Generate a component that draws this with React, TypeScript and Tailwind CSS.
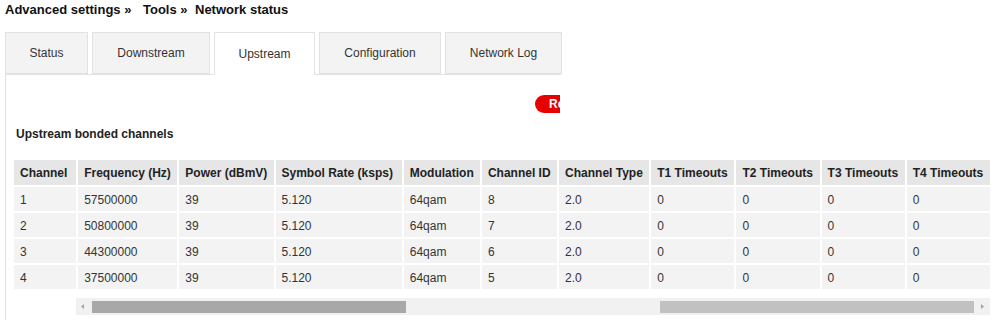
import React from "react";

const headers = [
  "Channel",
  "Frequency (Hz)",
  "Power (dBmV)",
  "Symbol Rate (ksps)",
  "Modulation",
  "Channel ID",
  "Channel Type",
  "T1 Timeouts",
  "T2 Timeouts",
  "T3 Timeouts",
  "T4 Timeouts",
];
const widths = [62, 99, 94, 126, 76, 75, 90, 83, 83, 83, 83];
const rows = [
  ["1", "57500000", "39", "5.120", "64qam", "8", "2.0", "0", "0", "0", "0"],
  ["2", "50800000", "39", "5.120", "64qam", "7", "2.0", "0", "0", "0", "0"],
  ["3", "44300000", "39", "5.120", "64qam", "6", "2.0", "0", "0", "0", "0"],
  ["4", "37500000", "39", "5.120", "64qam", "5", "2.0", "0", "0", "0", "0"],
];

const tabs = [
  { label: "Status", w: "w-[83px]" },
  { label: "Downstream", w: "w-[118px]" },
  { label: "Upstream", w: "w-[101px]", active: true },
  { label: "Configuration", w: "w-[122px]" },
  { label: "Network Log", w: "w-[117px]" },
];

export default function App() {
  return (
    <div className="w-[1000px] h-[320px] overflow-hidden bg-white text-[#222] font-['Liberation_Sans',Arial,sans-serif]">
      <div className="h-[32px] pl-[5px] pt-[2px] text-[13px] leading-[16px] font-bold text-[#111] whitespace-pre flex">
        <span className="w-[138px]">Advanced settings »</span>
        <span className="w-[52px]">Tools »</span>
        <span>Network status</span>
      </div>
      <div className="flex gap-[4px] pl-[5px] h-[43px] relative z-10">
        {tabs.map((t) => (
          <div
            key={t.label}
            className={`${t.w} flex items-center justify-center text-[12px] text-[#333] border border-[#e2e2e2] ${
              t.active ? "bg-white border-b-white h-[43px]" : "bg-[#f3f3f3] h-[42px]"
            }`}
          >
            {t.label}
          </div>
        ))}
      </div>
      <div className="ml-[5px] mt-[-1px] w-[556px] border-l border-t border-[#e2e2e2] h-[260px]">
        <div className="w-[554px] overflow-hidden pt-[20px] pl-[6px]">
          <div className="ml-[523px] w-[70px] h-[18px] rounded-full bg-[#e60000] text-white text-[12px] font-bold leading-[18px] pl-[14px]">
            Refresh
          </div>
        </div>
        <div className="mt-[14px] pl-[10px] text-[12px] leading-[14px] font-bold text-[#222]">
          Upstream bonded channels
        </div>
        <table
          className="mt-[17px] ml-[6px] border-separate border-spacing-[2px] table-fixed text-[12px] text-[#333]"
          style={{ width: 980 }}
        >
          <colgroup>
            {widths.map((w, i) => (
              <col key={i} style={{ width: w }} />
            ))}
          </colgroup>
          <thead>
            <tr>
              {headers.map((h) => (
                <th
                  key={h}
                  className="h-[25px] bg-[#e6e6e6] text-left font-bold pl-[6px] pr-0 pt-[1px] pb-0 whitespace-nowrap text-[#222]"
                >
                  {h}
                </th>
              ))}
            </tr>
          </thead>
          <tbody>
            {rows.map((r, i) => (
              <tr key={i}>
                {r.map((c, j) => (
                  <td key={j} className="h-[24px] bg-[#f3f3f3] pl-[6px] pt-[1px] pb-0 whitespace-nowrap">
                    {c}
                  </td>
                ))}
              </tr>
            ))}
          </tbody>
        </table>
        <div className="mt-[7px] ml-[70px] w-[914px] h-[17px] bg-[#f1f1f1] flex items-center relative">
          <svg width="16" height="17" viewBox="0 0 16 17" className="shrink-0">
            <path d="M8 6 L5 8.5 L8 11 Z" fill="#a3a3a3" />
          </svg>
          <div className="h-[12px] w-[314px] bg-[#a8a8a8]" />
          <div className="h-[12px] w-[254px]" />
          <div className="h-[12px] w-[314px] bg-[#c1c1c1]" />
          <svg width="16" height="17" viewBox="0 0 16 17" className="shrink-0">
            <path d="M7 6 L10 8.5 L7 11 Z" fill="#a3a3a3" />
          </svg>
        </div>
      </div>
    </div>
  );
}
